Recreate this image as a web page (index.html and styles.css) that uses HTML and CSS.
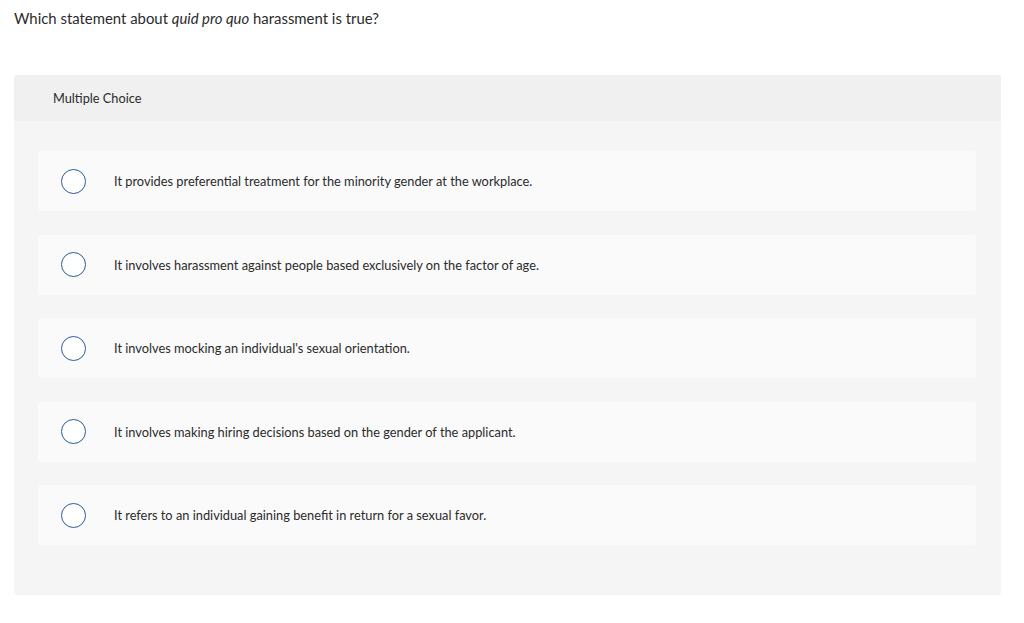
FILE: index.html
```html
<!DOCTYPE html>
<html lang="en">
<head>
<meta charset="utf-8">
<title>Multiple Choice</title>
<link rel="stylesheet" href="styles.css">
</head>
<body>
<div class="page">
  <p class="question">Which statement about <em>quid pro quo</em> harassment is true?</p>
  <section class="panel">
    <div class="panel-head">Multiple Choice</div>
    <div class="options">
      <label class="option"><span class="radio"></span><span class="opt-text">It provides preferential treatment for the minority gender at the workplace.</span></label>
      <label class="option"><span class="radio"></span><span class="opt-text">It involves harassment against people based exclusively on the factor of age.</span></label>
      <label class="option"><span class="radio"></span><span class="opt-text">It involves mocking an individual's sexual orientation.</span></label>
      <label class="option"><span class="radio"></span><span class="opt-text">It involves making hiring decisions based on the gender of the applicant.</span></label>
      <label class="option"><span class="radio"></span><span class="opt-text">It refers to an individual gaining benefit in return for a sexual favor.</span></label>
    </div>
  </section>
</div>
</body>
</html>
```

FILE: styles.css
```css
html, body {
  margin: 0;
  padding: 0;
  background: #ffffff;
}
body {
  font-family: Lato, "Liberation Sans", Arial, sans-serif;
  color: #333333;
}
.page {
  padding: 9px 23px 0 14px;
}
.question {
  margin: 0;
  font-size: 14.9px;
  line-height: 18px;
  color: #2b2b2b;
}
.question em {
  font-style: italic;
}
.panel {
  margin-top: 48px;
  background: #f5f5f5;
  border-radius: 3px;
  padding-bottom: 50px;
}
.panel-head {
  height: 46px;
  background: #f0f0f0;
  border-radius: 3px 3px 0 0;
  display: flex;
  align-items: center;
  padding-left: 39px;
  font-size: 12.75px;
  color: #2b2b2b;
}
.options {
  display: flex;
  flex-direction: column;
  gap: 23.5px;
  padding: 30px 25px 0 24px;
}
.option {
  height: 60px;
  background: #fafafa;
  border-radius: 3px;
  display: flex;
  align-items: center;
  padding-left: 23px;
}
.radio {
  width: 23px;
  height: 23px;
  border: 1.3px solid #2c5b9a;
  border-radius: 50%;
  background: #ffffff;
  flex: none;
}
.opt-text {
  margin-left: 28px;
  font-size: 12.8px;
  color: #2b2b2b;
}
```
